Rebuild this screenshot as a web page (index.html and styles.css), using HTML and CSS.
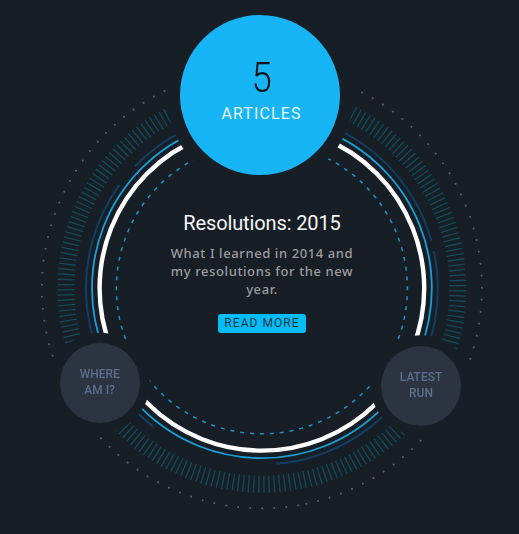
FILE: index.html
```
<!DOCTYPE html>
<html lang="en">
<head>
<meta charset="utf-8">
<title>Articles</title>
<link rel="stylesheet" href="styles.css">
</head>
<body>
<main class="dial">
  <svg class="rings" viewBox="0 0 519 534" aria-hidden="true">
    <defs>
      <mask id="gaps">
        <rect width="519" height="534" fill="#fff"/>
        <circle cx="260" cy="95" r="93.5" fill="#000"/>
        <circle cx="100" cy="382.7" r="50" fill="#000"/>
        <circle cx="421.3" cy="385.7" r="50.5" fill="#000"/>
      </mask>
    </defs>
    <g mask="url(#gaps)">
      <g transform="translate(261.9 288.3)">
        <circle class="ring dots" r="220" pathLength="360" transform="rotate(80.5)"/>
        <circle class="ring ticks" r="196" pathLength="360" transform="rotate(-89.67)"/>
        <path class="ring arc" d="M-126.8 -122A176 176 0 0 1 169.4 -47.7"/>
        <path class="ring arc" d="M172 -37.2A176 176 0 0 1 14.4 175.4"/>
        <path class="ring arc" d="M-108.8 138.3A176 176 0 0 1 -142.4 -103.4"/>
        <circle class="ring thin" r="169.9"/>
        <circle class="ring bold" r="162.3"/>
        <circle class="ring dashes" r="145.5" pathLength="1840"/>
      </g>
    </g>
  </svg>
  <a class="node node-articles"><span class="count">5</span><span class="kind">ARTICLES</span></a>
  <a class="node node-small node-where"><span>WHERE</span><span>AM I?</span></a>
  <a class="node node-small node-run"><span>LATEST</span><span>RUN</span></a>
  <article class="story">
    <h1>Resolutions: 2015</h1>
    <p>What I learned in 2014 and my resolutions for the new year.</p>
    <a class="more">READ MORE</a>
  </article>
</main>
</body>
</html>
```
FILE: styles.css
```
body {
  margin: 0;
  background: #181e26;
  font-family: Roboto, "Liberation Sans", sans-serif;
}
.dial {
  position: relative;
  width: 519px;
  height: 534px;
  overflow: hidden;
  display: flex;
  flex-direction: column;
  align-items: center;
}
.rings {
  position: absolute;
  inset: 0;
  width: 519px;
  height: 534px;
}
.ring { fill: none; }
.dots {
  stroke: #5b5f66;
  stroke-width: 2;
  stroke-linecap: round;
  stroke-dasharray: 0.01 3.129;
}
.ticks {
  stroke: #114b58;
  stroke-width: 17;
  stroke-dasharray: 0.4 1.103;
}
.arc { stroke: #123e63; stroke-width: 2; }
.thin { stroke: #18a0d8; stroke-width: 1.8; }
.bold { stroke: #fff; stroke-width: 4.4; }
.dashes {
  stroke: #1a93c4;
  stroke-width: 1.5;
  stroke-dasharray: 8 12;
  stroke-dashoffset: 4;
}
.node {
  position: absolute;
  border-radius: 50%;
  display: flex;
  flex-direction: column;
  align-items: center;
}
.node-articles {
  left: 180px;
  top: 15px;
  width: 160px;
  height: 160px;
  background: #18b5f6;
}
.count {
  margin: 39px 0 0 4px;
  font-size: 42px;
  line-height: 48px;
  font-weight: 300;
  color: #0c1217;
  transform: scaleX(.87);
}
.kind {
  margin: 2px 0 0 3px;
  font-size: 16px;
  line-height: 20px;
  letter-spacing: 1.1px;
  color: #e4f6ff;
}
.node-small {
  width: 80px;
  height: 80px;
  justify-content: center;
  background: #2b3440;
  color: #5d6e8d;
  font-size: 13px;
  line-height: 16px;
}
.node-small span {
  position: relative;
  top: -1px;
  font-weight: 500;
  transform: scaleX(.92);
}
.node-where { left: 60px; top: 342.7px; }
.node-run { left: 381.3px; top: 345.7px; }
.story {
  position: relative;
  width: 192px;
  margin: 210px 0 0 5px;
  text-align: center;
}
h1 {
  margin: 0;
  font-size: 20px;
  line-height: 26px;
  font-weight: 400;
  letter-spacing: -.12px;
  white-space: nowrap;
  color: #f4f6f7;
}
p {
  margin: 8px 0 0;
  font-family: "Noto Sans", sans-serif;
  font-size: 13px;
  line-height: 18px;
  font-weight: 500;
  letter-spacing: .6px;
  color: #9c9da0;
}
.more {
  display: block;
  width: 88px;
  height: 19px;
  margin: 16px auto 0;
  border-radius: 3px;
  background: #00bdf7;
  color: #0d3648;
  font-size: 12px;
  line-height: 18px;
  letter-spacing: 1.05px;
}
```
